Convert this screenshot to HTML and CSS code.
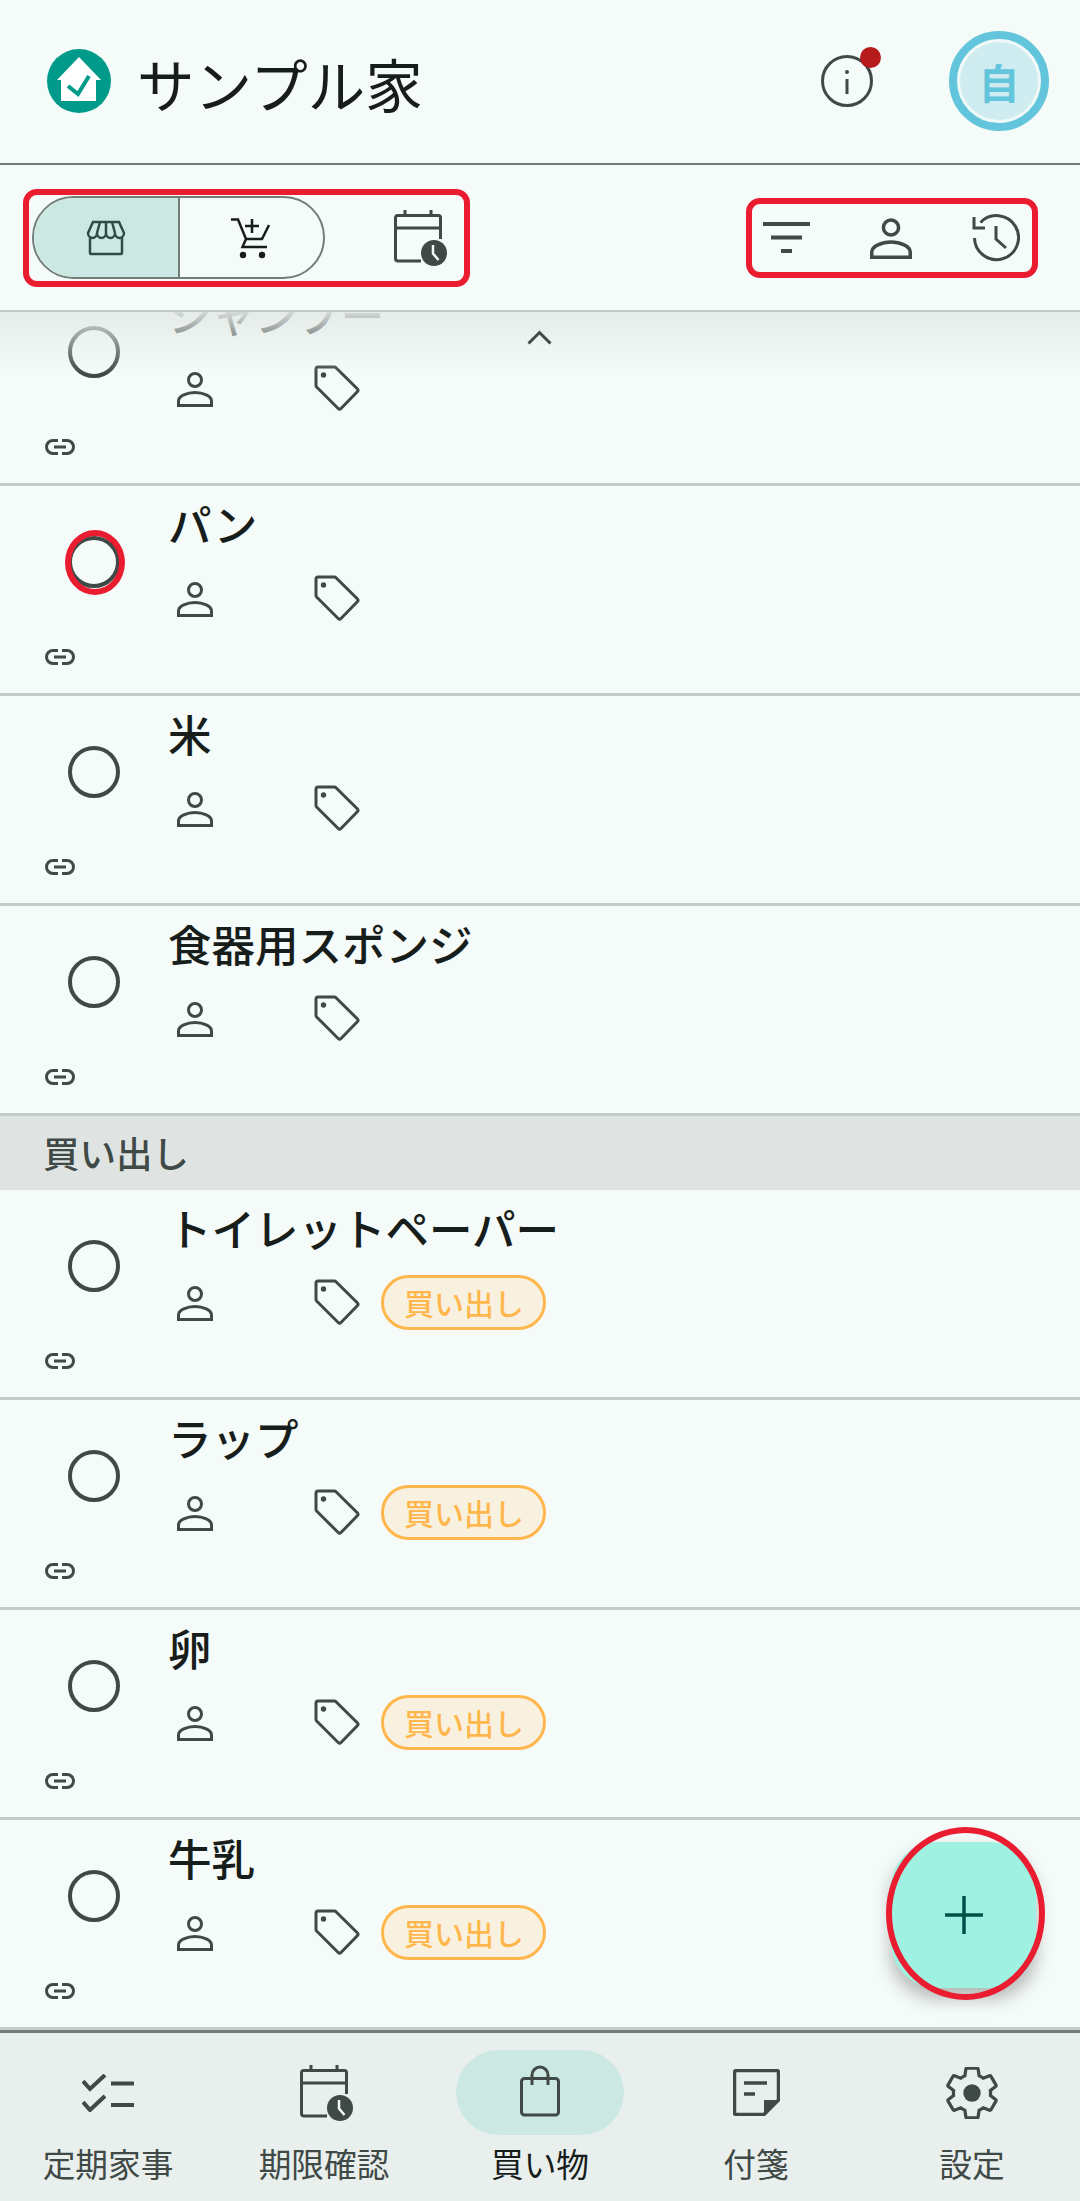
FILE: index.html
```html
<!DOCTYPE html>
<html lang="ja">
<head>
<meta charset="utf-8">
<title>サンプル家</title>
<link rel="stylesheet" href="styles.css">
</head>
<body>
<svg class="sprite" aria-hidden="true">
  <symbol id="i-person" viewBox="0 0 36 36"><circle cx="18" cy="9" r="6.5"/><path d="M1.5 34.5V30C1.5 25 10 21.5 18 21.5S34.5 25 34.5 30V34.5Z"/></symbol>
  <symbol id="i-tag" viewBox="0 0 46 46"><path d="M4 2H20.5a2 2 0 0 1 1.5.7L43.5 24a2 2 0 0 1 0 2.6L27 43.5a2 2 0 0 1-2.8 0L2.6 22a2 2 0 0 1-.6-1.5V4a2 2 0 0 1 2-2Z"/><circle class="fill" cx="9.5" cy="10" r="2.7"/></symbol>
  <symbol id="i-link" viewBox="0 0 30 16"><path d="M13 1.5H8a6.5 6.5 0 0 0 0 13H13M17 1.5H22a6.5 6.5 0 0 1 0 13H17M9 8H21"/></symbol>
  <symbol id="i-calendar" viewBox="0 0 53 56"><path d="M27 51H4a2.5 2.5 0 0 1-2.5-2.5V7.5a2 2 0 0 1 2-2H44.5a2 2 0 0 1 2 2V29M1.5 18H46.5M11 0V6M37 0V6"/><circle class="fill" cx="40" cy="43" r="13"/><path class="hand" d="M39 35V43.5L44.5 50"/></symbol>
</svg>

<div class="app">
  <header class="top">
    <svg class="logo" viewBox="0 0 64 64"><circle class="logo-bg" cx="32" cy="32" r="32"/><path class="logo-house" d="M32 8L54 31H49V52H14V31H10Z"/><path class="logo-check" d="M21 37L31 45L42 27"/></svg>
    <h1 class="title">サンプル家</h1>
    <div class="info">
      <svg class="icon info-icon" viewBox="0 0 52 52"><circle cx="26" cy="26" r="24.5"/><path d="M26 24V39"/><circle class="fill" cx="26" cy="17" r="2"/></svg>
      <span class="dot"></span>
    </div>
    <div class="avatar"><span class="avatar-inner">自</span></div>
  </header>

  <div class="toolbar">
    <div class="group group-left">
      <div class="segment">
        <div class="seg seg-on">
          <svg class="icon store" viewBox="0 0 40 36"><path d="M7 2H33L38 13A4.5 5 0 0 1 29 13A4.5 5 0 0 1 20 13A4.5 5 0 0 1 11 13A4.5 5 0 0 1 2 13ZM11 13L14 2M20 13V2M29 13L26 2M4 18V33a1 1 0 0 0 1 1H35a1 1 0 0 0 1-1V18"/></svg>
        </div>
        <div class="seg">
          <svg class="icon cart" viewBox="0 0 40 42"><path d="M0 2.500H7L15 22H31L38 8M15 22L11.500 30H36M21 2V16M14 9H28"/><circle class="fill" cx="12" cy="38" r="3.200"/><circle class="fill" cx="31" cy="38" r="3.200"/></svg>
        </div>
      </div>
      <svg class="icon calendar tool-cal"><use href="#i-calendar"/></svg>
    </div>
    <div class="group group-right">
      <svg class="icon filter" viewBox="0 0 47 32"><path d="M0 2H47M8 15.500H39M18 29H29"/></svg>
      <svg class="icon person-lg"><use href="#i-person"/></svg>
      <svg class="icon history" viewBox="0 0 48 48"><path d="M2.500 24A22 22 0 1 0 8.500 8.500M2 3V14H13M24 12V25L34 34"/></svg>
    </div>
  </div>

  <main class="list">
    <div class="row row-first">
      <div class="check-cell"><span class="radio"></span></div>
      <div class="main">
        <div class="name">シャンプー</div>
        <div class="meta"><svg class="icon person"><use href="#i-person"/></svg><svg class="icon tag"><use href="#i-tag"/></svg></div>
      </div>
      <div class="link-cell"><svg class="icon link"><use href="#i-link"/></svg></div>
    </div>
    <div class="row">
      <div class="check-cell"><span class="radio"><span class="ring-radio"></span></span></div>
      <div class="main">
        <div class="name">パン</div>
        <div class="meta"><svg class="icon person"><use href="#i-person"/></svg><svg class="icon tag"><use href="#i-tag"/></svg></div>
      </div>
      <div class="link-cell"><svg class="icon link"><use href="#i-link"/></svg></div>
    </div>
    <div class="row">
      <div class="check-cell"><span class="radio"></span></div>
      <div class="main">
        <div class="name">米</div>
        <div class="meta"><svg class="icon person"><use href="#i-person"/></svg><svg class="icon tag"><use href="#i-tag"/></svg></div>
      </div>
      <div class="link-cell"><svg class="icon link"><use href="#i-link"/></svg></div>
    </div>
    <div class="row">
      <div class="check-cell"><span class="radio"></span></div>
      <div class="main">
        <div class="name">食器用スポンジ</div>
        <div class="meta"><svg class="icon person"><use href="#i-person"/></svg><svg class="icon tag"><use href="#i-tag"/></svg></div>
      </div>
      <div class="link-cell"><svg class="icon link"><use href="#i-link"/></svg></div>
    </div>
    <div class="section">買い出し</div>
    <div class="row">
      <div class="check-cell"><span class="radio"></span></div>
      <div class="main">
        <div class="name">トイレットペーパー</div>
        <div class="meta"><svg class="icon person"><use href="#i-person"/></svg><svg class="icon tag"><use href="#i-tag"/></svg><span class="chip">買い出し</span></div>
      </div>
      <div class="link-cell"><svg class="icon link"><use href="#i-link"/></svg></div>
    </div>
    <div class="row">
      <div class="check-cell"><span class="radio"></span></div>
      <div class="main">
        <div class="name">ラップ</div>
        <div class="meta"><svg class="icon person"><use href="#i-person"/></svg><svg class="icon tag"><use href="#i-tag"/></svg><span class="chip">買い出し</span></div>
      </div>
      <div class="link-cell"><svg class="icon link"><use href="#i-link"/></svg></div>
    </div>
    <div class="row">
      <div class="check-cell"><span class="radio"></span></div>
      <div class="main">
        <div class="name">卵</div>
        <div class="meta"><svg class="icon person"><use href="#i-person"/></svg><svg class="icon tag"><use href="#i-tag"/></svg><span class="chip">買い出し</span></div>
      </div>
      <div class="link-cell"><svg class="icon link"><use href="#i-link"/></svg></div>
    </div>
    <div class="row">
      <div class="check-cell"><span class="radio"></span></div>
      <div class="main">
        <div class="name">牛乳</div>
        <div class="meta"><svg class="icon person"><use href="#i-person"/></svg><svg class="icon tag"><use href="#i-tag"/></svg><span class="chip">買い出し</span></div>
      </div>
      <div class="link-cell"><svg class="icon link"><use href="#i-link"/></svg></div>
    </div>
    <div class="fade"></div>
    <svg class="icon chevron" viewBox="0 0 25 15"><path d="M1.500 13.500L12.500 2.500L23.500 13.500"/></svg>
  </main>

  <nav class="nav">
    <div class="tab">
      <div class="tab-icon"><svg class="icon checks" viewBox="0 0 52 38"><path d="M1 7L8 15L23 1M1 28L8 36L23 22M29 9.500H52M29 31H52"/></svg></div>
      <span class="tab-label">定期家事</span>
    </div>
    <div class="tab">
      <div class="tab-icon"><svg class="icon calendar nav-cal"><use href="#i-calendar"/></svg></div>
      <span class="tab-label">期限確認</span>
    </div>
    <div class="tab tab-on">
      <div class="tab-icon"><svg class="icon bag" viewBox="0 0 40 52"><path d="M4.500 13.500H35.500a3 3 0 0 1 3 3V47a3 3 0 0 1-3 3H4.500a3 3 0 0 1-3-3V16.500a3 3 0 0 1 3-3ZM12 20V10a8 8 0 0 1 16 0V20"/></svg></div>
      <span class="tab-label">買い物</span>
    </div>
    <div class="tab">
      <div class="tab-icon"><svg class="icon note" viewBox="0 0 47 47"><path d="M1.500 3.500a2 2 0 0 1 2-2H43.500a2 2 0 0 1 2 2V31L31 45.500H3.500a2 2 0 0 1-2-2ZM11 14H34M11 25H22"/><path class="fill" d="M45.500 31H31V45.500Z"/></svg></div>
      <span class="tab-label">付箋</span>
    </div>
    <div class="tab">
      <div class="tab-icon"><svg class="icon gear" viewBox="1.500 1.500 21 21"><path d="M19.430 12.980c.04-.32.07-.64.07-.98 0-.34-.03-.66-.07-.98l2.110-1.650c.19-.15.24-.42.12-.64l-2-3.460c-.09-.16-.26-.25-.44-.25-.06 0-.12.01-.17.03l-2.490 1c-.52-.4-1.080-.73-1.690-.98l-.38-2.650C14.460 2.180 14.250 2 14 2h-4c-.25 0-.46.18-.49.42l-.38 2.650c-.61.25-1.170.59-1.690.98l-2.490-1c-.06-.02-.12-.03-.18-.03-.17 0-.34.09-.43.25l-2 3.460c-.13.22-.07.49.12.64l2.110 1.650c-.04.32-.07.65-.07.98 0 .33.03.66.07.98l-2.110 1.650c-.19.15-.24.42-.12.64l2 3.460c.09.16.26.25.44.25.06 0 .12-.01.17-.03l2.490-1c.52.4 1.080.73 1.690.98l.38 2.650c.03.24.24.42.49.42h4c.25 0 .46-.18.49-.42l.38-2.650c.61-.25 1.170-.59 1.690-.98l2.490 1c.06.02.12.03.18.03.17 0 .34-.09.43-.25l2-3.460c.12-.22.07-.49-.12-.64l-2.110-1.650z"/><circle class="fill" cx="12" cy="12" r="3.500"/></svg></div>
      <span class="tab-label">設定</span>
    </div>
  </nav>

  <button class="fab" type="button">
    <svg class="icon plus" viewBox="0 0 38 38"><path d="M0 19H38M19 0V38"/></svg>
    <span class="ring-fab"></span>
  </button>
</div>
</body>
</html>
```

FILE: styles.css
```css
* { box-sizing: border-box; }
html, body { margin: 0; padding: 0; }
body {
  background: #f5fbf8;
  color: #171d1b;
  font-family: "Noto Sans CJK JP", "Noto Sans", sans-serif;
}
.sprite { position: absolute; width: 0; height: 0; overflow: hidden; }
.app {
  position: relative;
  width: 1080px;
  height: 2201px;
  display: flex;
  flex-direction: column;
  overflow: hidden;
  background: #f5fbf8;
}
.icon {
  display: block;
  flex: none;
  fill: none;
  stroke: #3f4946;
  stroke-width: 3;
  color: #3f4946;
}
.icon .fill, .fill { fill: #3f4946; stroke: none; }
symbol { fill: none; stroke: #3f4946; stroke-width: 3; }
symbol .fill { fill: #3f4946; stroke: none; }
symbol .hand { stroke: #f5fbf8; stroke-width: 2.5; }

/* header */
.top {
  height: 165px;
  flex: none;
  display: flex;
  align-items: center;
  padding: 0 31px 2px 47px;
  border-bottom: 2px solid #727d78;
}
.logo { width: 64px; height: 64px; flex: none; }
.logo-bg { fill: #009a8a; }
.logo-house { fill: #fff; }
.logo-check { fill: none; stroke: #009a8a; stroke-width: 4; }
.title {
  margin: 4px 0 0 26px;
  font-size: 57.500px;
  line-height: 70px;
  font-weight: 400;
  color: #171d1b;
}
.info { position: relative; margin-left: auto; width: 52px; height: 52px; }
.info-icon { width: 52px; height: 52px; }
.dot {
  position: absolute;
  left: 39px;
  top: -8px;
  width: 21px;
  height: 21px;
  border-radius: 50%;
  background: #b71c1c;
}
.avatar {
  margin-left: 76px;
  width: 100px;
  height: 100px;
  padding: 3px;
  border: 8px solid #63c5dc;
  border-radius: 50%;
  background: #eef9f8;
}
.avatar-inner {
  display: flex;
  align-items: center;
  justify-content: center;
  width: 100%;
  height: 100%;
  border-radius: 50%;
  background: #cfecf0;
  color: #63c5dc;
  font-size: 41px;
  font-weight: 700;
}

/* toolbar */
.toolbar {
  height: 147px;
  flex: none;
  display: flex;
  align-items: center;
  justify-content: space-between;
  padding: 0 42px 0 23px;
  border-bottom: 2px solid #bec9c4;
}
.group {
  display: flex;
  align-items: center;
  border: 6px solid #e91c30;
  border-radius: 14px;
}
.group-left { height: 98px; padding: 0 17px 0 3px; }
.group-right { height: 80px; padding: 0 12px 0 11px; gap: 60px; }
.segment {
  display: flex;
  width: 293px;
  height: 83px;
  border: 2px solid #727d78;
  border-radius: 42px;
  overflow: hidden;
}
.seg { flex: 1; display: flex; align-items: center; justify-content: center; }
.seg-on { background: #cce8e2; border-right: 2px solid #727d78; }
.store { width: 40px; height: 36px; stroke: #334b47; stroke-width: 2.500; }
.cart { width: 40px; height: 42px; stroke: #171d1b; stroke-width: 2.500; }
.cart .fill { fill: #171d1b; }
.calendar { width: 53px; height: 56px; }
.tool-cal { margin-left: 69px; }
.filter { width: 47px; height: 32px; stroke-width: 4; }
.person-lg { width: 42px; height: 42px; }
.history { width: 48px; height: 48px; }

/* list */
.list { position: relative; flex: 1; min-height: 0; overflow: hidden; }
.fade {
  position: absolute;
  left: 0;
  right: 0;
  top: 0;
  height: 62px;
  background: linear-gradient(to bottom, rgba(228,234,232,.92), rgba(245,251,248,0));
}
.row {
  height: 210px;
  display: grid;
  grid-template-columns: 170px 1fr;
  grid-template-rows: 141px 1fr;
  border-bottom: 3px solid #c3cdc8;
}
.row-first { margin-top: -36px; }
.check-cell { padding: 50px 0 0 68px; }
.radio {
  position: relative;
  display: block;
  width: 52px;
  height: 52px;
  border: 4px solid #3f4946;
  border-radius: 50%;
}
.ring-radio {
  position: absolute;
  left: -7px;
  top: -10px;
  width: 60px;
  height: 65px;
  border: 6px solid #e91c30;
  border-radius: 50%;
}
.main { min-width: 0; padding-top: 8px; }
.name {
  height: 60px;
  margin-left: -2px;
  font-size: 43.500px;
  line-height: 60px;
  font-weight: 500;
  color: #171d1b;
  white-space: nowrap;
}
.chevron {
  position: absolute;
  left: 527px;
  top: 18px;
  width: 25px;
  height: 15px;
}
.meta { display: flex; align-items: center; height: 56px; margin-top: 16px; padding-left: 7px; }
.person { width: 36px; height: 36px; margin-top: 2px; }
.tag { width: 46px; height: 46px; margin-left: 101px; }
.chip {
  display: flex;
  align-items: center;
  height: 55px;
  margin-left: 21px;
  padding: 0 19px 0 20px;
  border: 3px solid #ffb74d;
  border-radius: 28px;
  background: #f9f1e0;
  color: #ffb74d;
  font-size: 30px;
  font-weight: 500;
}
.link-cell { grid-column: 1; padding: 22px 0 0 45px; }
.link { width: 30px; height: 16px; }
.section {
  height: 74px;
  padding: 0 0 0 43px;
  background: #dfe4e2;
  color: #3f4946;
  font-size: 36.500px;
  line-height: 74px;
  font-weight: 500;
}

/* bottom nav */
.nav {
  height: 171px;
  flex: none;
  display: grid;
  grid-template-columns: repeat(5, 1fr);
  border-top: 3px solid #727d78;
  background: #e9efec;
}
.tab { display: flex; flex-direction: column; align-items: center; padding-top: 17px; }
.tab-icon {
  display: flex;
  align-items: center;
  justify-content: center;
  width: 168px;
  height: 85px;
  border-radius: 43px;
}
.tab-on .tab-icon { background: #cce8e2; }
.tab-label {
  margin-top: 6px;
  font-size: 32.700px;
  line-height: 44px;
  color: #3f4946;
}
.tab-on .tab-label { color: #171d1b; }
.checks { width: 52px; height: 38px; stroke-width: 4; }
.nav-cal { margin-left: 5px; }
.bag { width: 40px; height: 52px; margin-bottom: 3px; }
.note { width: 47px; height: 47px; stroke-width: 3.500; }
.gear { width: 52px; height: 52px; stroke-width: 1.300; }

/* floating action button */
.fab {
  position: absolute;
  right: 44px;
  bottom: 213px;
  width: 145px;
  height: 146px;
  padding: 0;
  display: flex;
  align-items: center;
  justify-content: center;
  border: 0;
  border-radius: 46px;
  background: #9ff2e2;
  box-shadow: 0 10px 18px rgba(0, 0, 0, .28);
}
.plus { width: 38px; height: 38px; stroke: #00504a; stroke-width: 3.500; }
.ring-fab {
  position: absolute;
  left: -5px;
  top: -15px;
  width: 159px;
  height: 173px;
  border: 6px solid #e91c30;
  border-radius: 50%;
}
```
